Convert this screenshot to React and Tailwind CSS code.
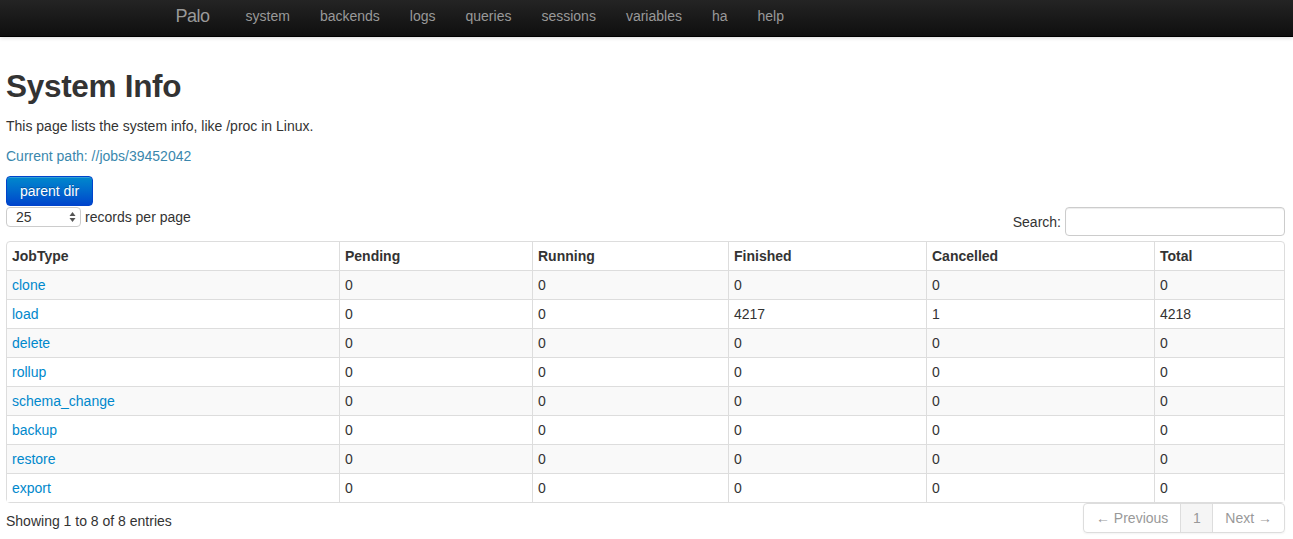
import React from 'react';

const navItems = ['system', 'backends', 'logs', 'queries', 'sessions', 'variables', 'ha', 'help'];

const columns = [
  { key: 'type', label: 'JobType', w: 'w-[332px]' },
  { key: 'pending', label: 'Pending', w: 'w-[193px]' },
  { key: 'running', label: 'Running', w: 'w-[196px]' },
  { key: 'finished', label: 'Finished', w: 'w-[198px]' },
  { key: 'cancelled', label: 'Cancelled', w: 'w-[228px]' },
  { key: 'total', label: 'Total', w: '' },
];

const rows = [
  ['clone', 0, 0, 0, 0, 0],
  ['load', 0, 0, 4217, 1, 4218],
  ['delete', 0, 0, 0, 0, 0],
  ['rollup', 0, 0, 0, 0, 0],
  ['schema_change', 0, 0, 0, 0, 0],
  ['backup', 0, 0, 0, 0, 0],
  ['restore', 0, 0, 0, 0, 0],
  ['export', 0, 0, 0, 0, 0],
];

const Navbar = () => (
  <div className="h-[37px] bg-gradient-to-b from-[#242424] to-[#0f0f0f] border-b border-[#000] shadow-[0_1px_4px_rgba(0,0,0,0.15)]">
    <div className="w-[940px] mx-auto flex items-center h-full pb-[4px]">
      <span className="text-[18px] leading-[20px] text-[#999] pr-[21px] font-light tracking-[-0.5px] -ml-[1px]">Palo</span>
      {navItems.map((item) => (
        <span key={item} className="px-[15px] text-[14px] leading-[20px] text-[#999] first:pl-[16px]">
          {item}
        </span>
      ))}
    </div>
  </div>
);

const JobsTable = () => (
  <table className="w-[1279px] border-separate border-spacing-0 border border-[#ddd] rounded-[4px] text-[14px] leading-[20px] table-fixed">
    <thead>
      <tr>
        {columns.map((c, i) => (
          <th
            key={c.key}
            className={`${c.w} text-left font-bold px-[5px] py-[4px] ${i > 0 ? 'border-l border-[#ddd]' : ''}`}
          >
            {c.label}
          </th>
        ))}
      </tr>
    </thead>
    <tbody>
      {rows.map((r, ri) => (
        <tr key={r[0]} className={ri % 2 === 0 ? 'bg-[#f9f9f9]' : 'bg-white'}>
          {r.map((v, ci) => (
            <td
              key={ci}
              className={`px-[5px] py-[4px] border-t border-[#ddd] ${ci > 0 ? 'border-l' : ''} ${
                ci === 0 ? 'text-[#0088cc]' : ''
              }`}
            >
              {v}
            </td>
          ))}
        </tr>
      ))}
    </tbody>
  </table>
);

export default function App() {
  return (
    <div className="min-h-screen bg-white text-[#333] font-['Liberation_Sans',Arial,sans-serif] text-[14px] leading-[20px]">
      <Navbar />
      <div className="px-[6px] pt-[29px]">
        <h2 className="text-[31.5px] leading-[40px] font-bold mb-[10px] tracking-[-0.3px]">System Info</h2>
        <p className="mb-[10px]">This page lists the system info, like /proc in Linux.</p>
        <p className="mb-[10px] text-[#3a87ad]">Current path: //jobs/39452042</p>
        <button className="h-[30px] px-[13px] text-white rounded-[4px] bg-gradient-to-b from-[#0088cc] to-[#0044cc] border border-[#0044cc] shadow-[inset_0_1px_0_rgba(255,255,255,0.2)] [text-shadow:0_-1px_0_rgba(0,0,0,0.25)]">
          parent dir
        </button>
        <div className="flex justify-between items-start mt-[1px] w-[1279px]">
          <div className="flex items-center">
            <div className="w-[75px] h-[20px] border border-[#ccc] rounded-[4px] bg-white flex items-center justify-between pl-[9px] pr-[4px] text-[14px]">
              <span>25</span>
              <svg width="7" height="12" viewBox="0 0 7 12">
                <path d="M3.5 1 L6.5 5 L0.5 5 Z" fill="#555" />
                <path d="M3.5 11 L6.5 7 L0.5 7 Z" fill="#555" />
              </svg>
            </div>
            <span className="ml-[4px]">records per page</span>
          </div>
          <div className="flex items-center">
            <span className="mr-[4px]">Search:</span>
            <div className="w-[220px] h-[29px] border border-[#ccc] rounded-[4px] bg-white shadow-[inset_0_1px_1px_rgba(0,0,0,0.075)]" />
          </div>
        </div>
        <div className="mt-[5px]">
          <JobsTable />
        </div>
        <div className="flex justify-between items-start w-[1279px]">
          <span className="mt-[8px]">Showing 1 to 8 of 8 entries</span>
          <div className="flex h-[30px] border border-[#ddd] rounded-[4px] text-[#999] shadow-[0_1px_2px_rgba(0,0,0,0.05)]">
            <span className="px-[12px] flex items-center">← Previous</span>
            <span className="w-[32px] flex items-center justify-center border-l border-[#ddd] bg-[#f5f5f5]">1</span>
            <span className="px-[12px] flex items-center border-l border-[#ddd]">Next →</span>
          </div>
        </div>
      </div>
    </div>
  );
}
